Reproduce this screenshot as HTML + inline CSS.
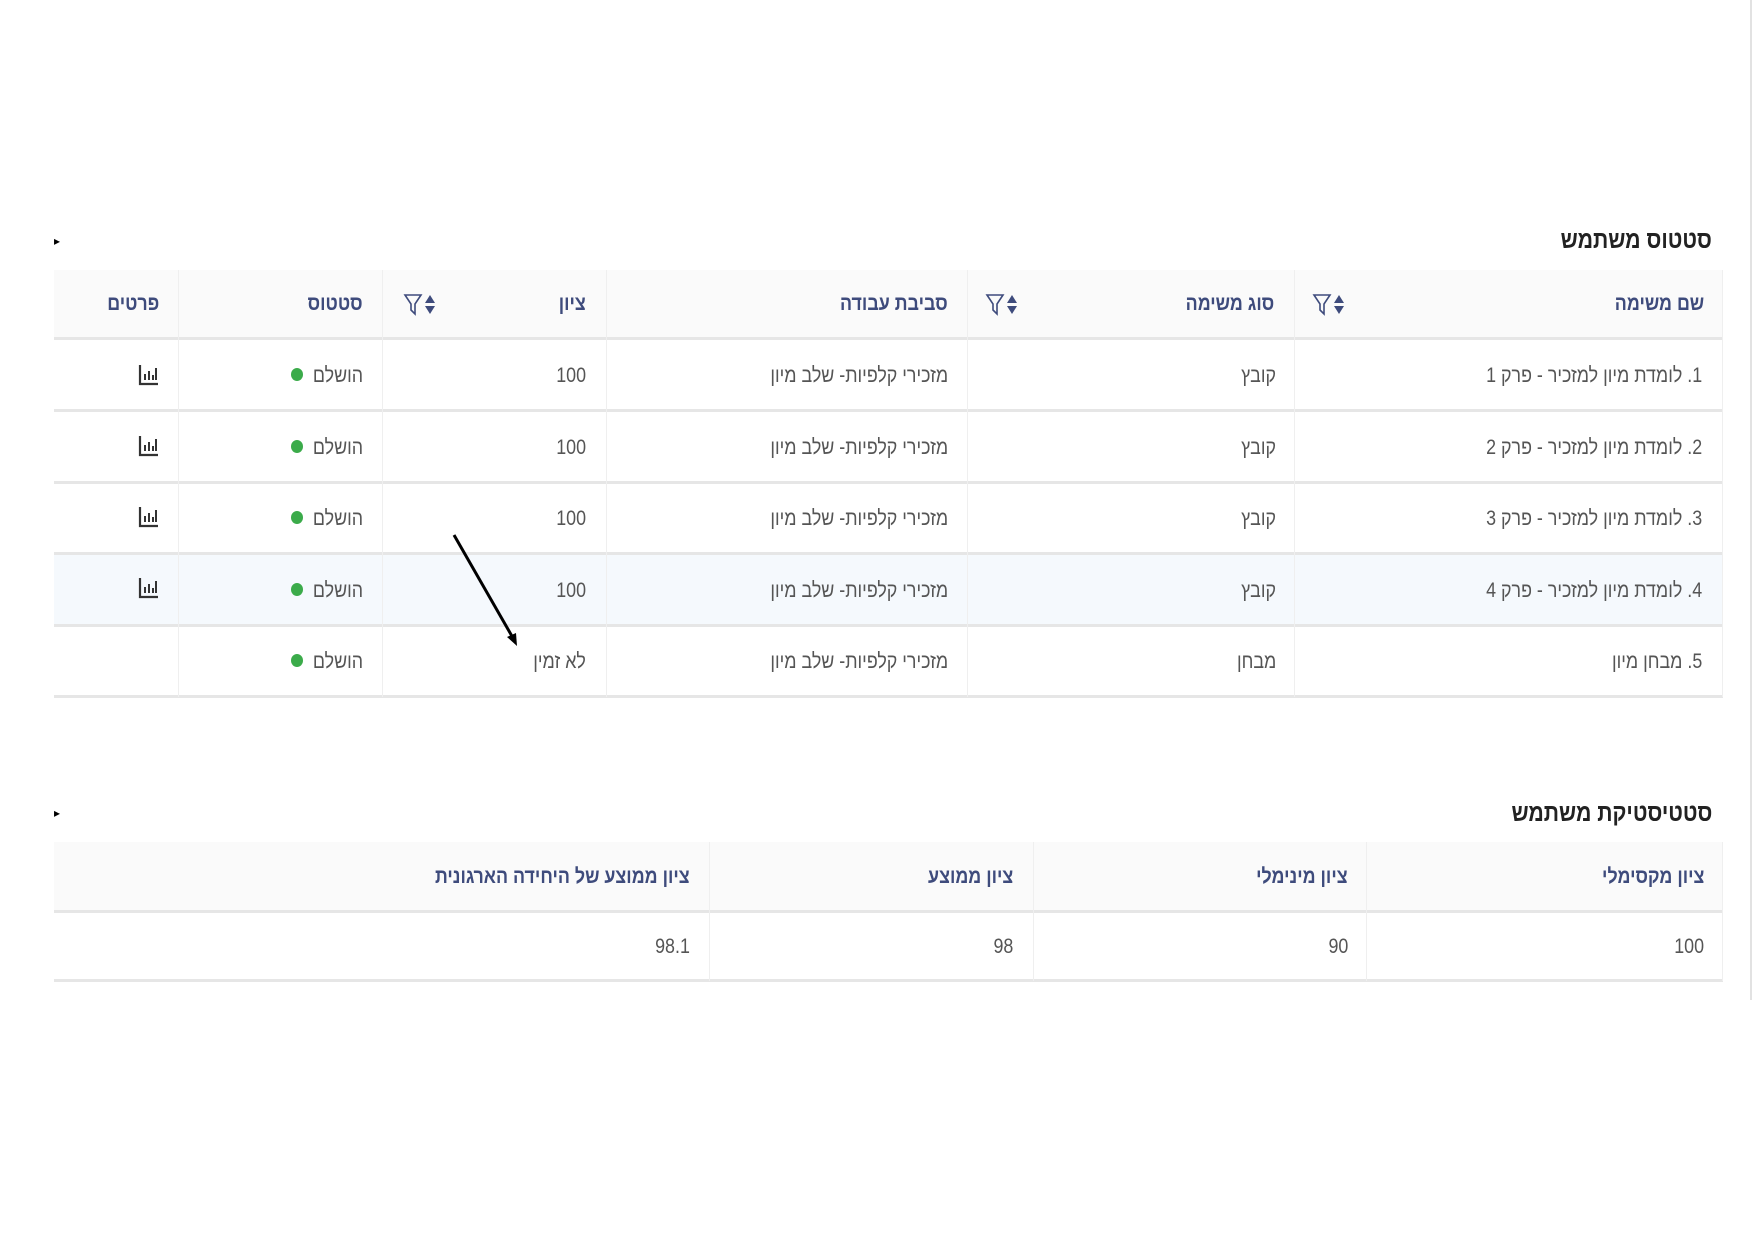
<!DOCTYPE html>
<html><head><meta charset="utf-8"><style>
body{margin:0;width:1754px;height:1240px;background:#fff;position:relative;overflow:hidden;font-family:"Liberation Sans","DejaVu Sans",sans-serif;}
.a{position:absolute;}
.title{font-size:25px;font-weight:bold;color:#222;direction:rtl;transform:scaleX(0.85);transform-origin:right center;}
.hdr{background:#fafafa;}
.h{color:#3e4b7c;font-size:21px;font-weight:bold;direction:rtl;white-space:nowrap;transform:scaleX(0.85);transform-origin:right center;}
.c{color:#555;font-size:21px;direction:rtl;white-space:nowrap;transform:scaleX(0.85);transform-origin:right center;}
.hl{background:#e6e6e6;height:3px;}
.vl{background:#efefef;width:1px;}
.dot{width:12px;height:13px;border-radius:50%;background:#3bab4a;}
</style></head><body>
<div class="a" style="left:1750px;top:0;width:2px;height:1000px;background:#e2e2e2"></div>

<div class="a title" style="right:42px;top:226px">סטטוס משתמש</div>
<div class="a" style="left:54px;top:234px;font-size:12px">▸</div>

<div class="a hdr" style="left:54px;top:270px;width:1669px;height:68px"></div>
<div class="a" style="left:54px;top:554px;width:1669px;height:71px;background:#f5f9fd"></div>
<div class="a hl" style="left:54px;top:337px;width:1669px"></div>
<div class="a hl" style="left:54px;top:409px;width:1669px"></div>
<div class="a hl" style="left:54px;top:481px;width:1669px"></div>
<div class="a hl" style="left:54px;top:552px;width:1669px"></div>
<div class="a hl" style="left:54px;top:624px;width:1669px"></div>
<div class="a hl" style="left:54px;top:695px;width:1669px"></div>
<div class="a vl" style="left:178px;top:270px;height:427px"></div>
<div class="a vl" style="left:382px;top:270px;height:427px"></div>
<div class="a vl" style="left:606px;top:270px;height:427px"></div>
<div class="a vl" style="left:967px;top:270px;height:427px"></div>
<div class="a vl" style="left:1294px;top:270px;height:427px"></div>
<div class="a vl" style="left:1722px;top:270px;height:427px"></div>

<div class="a h" style="right:50px;top:292px">שם משימה</div>
<div class="a h" style="right:480px;top:292px">סוג משימה</div>
<div class="a h" style="right:806px;top:292px">סביבת עבודה</div>
<div class="a h" style="right:1168px;top:292px">ציון</div>
<div class="a h" style="right:1391px;top:292px">סטטוס</div>
<div class="a h" style="right:1595px;top:292px">פרטים</div>

<svg class="a" style="left:1312px;top:291px" width="42" height="28"><path d="M2 4h16l-6 9v10l-4-4v-6z" fill="none" stroke="#3e4b7c" stroke-width="1.6"/><path d="M22 12l5-8 5 8z M22 15l5 8 5-8z" fill="#3e4b7c"/></svg>
<svg class="a" style="left:985px;top:291px" width="42" height="28"><path d="M2 4h16l-6 9v10l-4-4v-6z" fill="none" stroke="#3e4b7c" stroke-width="1.6"/><path d="M22 12l5-8 5 8z M22 15l5 8 5-8z" fill="#3e4b7c"/></svg>
<svg class="a" style="left:403px;top:291px" width="42" height="28"><path d="M2 4h16l-6 9v10l-4-4v-6z" fill="none" stroke="#3e4b7c" stroke-width="1.6"/><path d="M22 12l5-8 5 8z M22 15l5 8 5-8z" fill="#3e4b7c"/></svg>

<div class="a c" style="right:52px;top:364px">1. לומדת מיון למזכיר - פרק 1</div>
<div class="a c" style="right:478px;top:364px">קובץ</div>
<div class="a c" style="right:806px;top:364px">מזכירי קלפיות- שלב מיון</div>
<div class="a c" style="right:1168px;top:364px">100</div>
<div class="a c" style="right:1391px;top:364px">הושלם</div>
<div class="a dot" style="left:291px;top:368px"></div>

<div class="a c" style="right:52px;top:436px">2. לומדת מיון למזכיר - פרק 2</div>
<div class="a c" style="right:478px;top:436px">קובץ</div>
<div class="a c" style="right:806px;top:436px">מזכירי קלפיות- שלב מיון</div>
<div class="a c" style="right:1168px;top:436px">100</div>
<div class="a c" style="right:1391px;top:436px">הושלם</div>
<div class="a dot" style="left:291px;top:440px"></div>

<div class="a c" style="right:52px;top:507px">3. לומדת מיון למזכיר - פרק 3</div>
<div class="a c" style="right:478px;top:507px">קובץ</div>
<div class="a c" style="right:806px;top:507px">מזכירי קלפיות- שלב מיון</div>
<div class="a c" style="right:1168px;top:507px">100</div>
<div class="a c" style="right:1391px;top:507px">הושלם</div>
<div class="a dot" style="left:291px;top:511px"></div>

<div class="a c" style="right:52px;top:579px">4. לומדת מיון למזכיר - פרק 4</div>
<div class="a c" style="right:478px;top:579px">קובץ</div>
<div class="a c" style="right:806px;top:579px">מזכירי קלפיות- שלב מיון</div>
<div class="a c" style="right:1168px;top:579px">100</div>
<div class="a c" style="right:1391px;top:579px">הושלם</div>
<div class="a dot" style="left:291px;top:583px"></div>

<div class="a c" style="right:52px;top:650px">5. מבחן מיון</div>
<div class="a c" style="right:478px;top:650px">מבחן</div>
<div class="a c" style="right:806px;top:650px">מזכירי קלפיות- שלב מיון</div>
<div class="a c" style="right:1168px;top:650px">לא זמין</div>
<div class="a c" style="right:1391px;top:650px">הושלם</div>
<div class="a dot" style="left:291px;top:654px"></div>

<svg class="a" style="left:138px;top:364px" width="22" height="240">
<g fill="none" stroke="#333" stroke-width="2.2"><path d="M2 1v19h18"/><path d="M2 72v19h18"/><path d="M2 143v19h18"/><path d="M2 214v19h18"/></g>
<g stroke="#333" stroke-width="2"><path d="M7 16v-6M11 16v-9M15 16v-5M18 16v-12"/><path d="M7 87v-6M11 87v-9M15 87v-5M18 87v-12"/><path d="M7 158v-6M11 158v-9M15 158v-5M18 158v-12"/><path d="M7 229v-6M11 229v-9M15 229v-5M18 229v-12"/></g>
</svg>

<svg class="a" style="left:0;top:0" width="600" height="700"><line x1="454" y1="535" x2="513" y2="638" stroke="#000" stroke-width="3"/><path d="M517 646l-10-9 9-4z" fill="#000"/></svg>

<div class="a title" style="right:42px;top:799px">סטטיסטיקת משתמש</div>
<div class="a" style="left:54px;top:806px;font-size:12px">▸</div>
<div class="a hdr" style="left:54px;top:842px;width:1669px;height:69px"></div>
<div class="a hl" style="left:54px;top:910px;width:1669px"></div>
<div class="a hl" style="left:54px;top:979px;width:1669px"></div>
<div class="a vl" style="left:709px;top:842px;height:139px"></div>
<div class="a vl" style="left:1033px;top:842px;height:139px"></div>
<div class="a vl" style="left:1366px;top:842px;height:139px"></div>
<div class="a vl" style="left:1722px;top:842px;height:139px"></div>
<div class="a h" style="right:50px;top:865px">ציון מקסימלי</div>
<div class="a h" style="right:406px;top:865px">ציון מינימלי</div>
<div class="a h" style="right:741px;top:865px">ציון ממוצע</div>
<div class="a h" style="right:1064px;top:865px">ציון ממוצע של היחידה הארגונית</div>
<div class="a c" style="right:50px;top:935px">100</div>
<div class="a c" style="right:406px;top:935px">90</div>
<div class="a c" style="right:741px;top:935px">98</div>
<div class="a c" style="right:1064px;top:935px">98.1</div>
</body></html>
